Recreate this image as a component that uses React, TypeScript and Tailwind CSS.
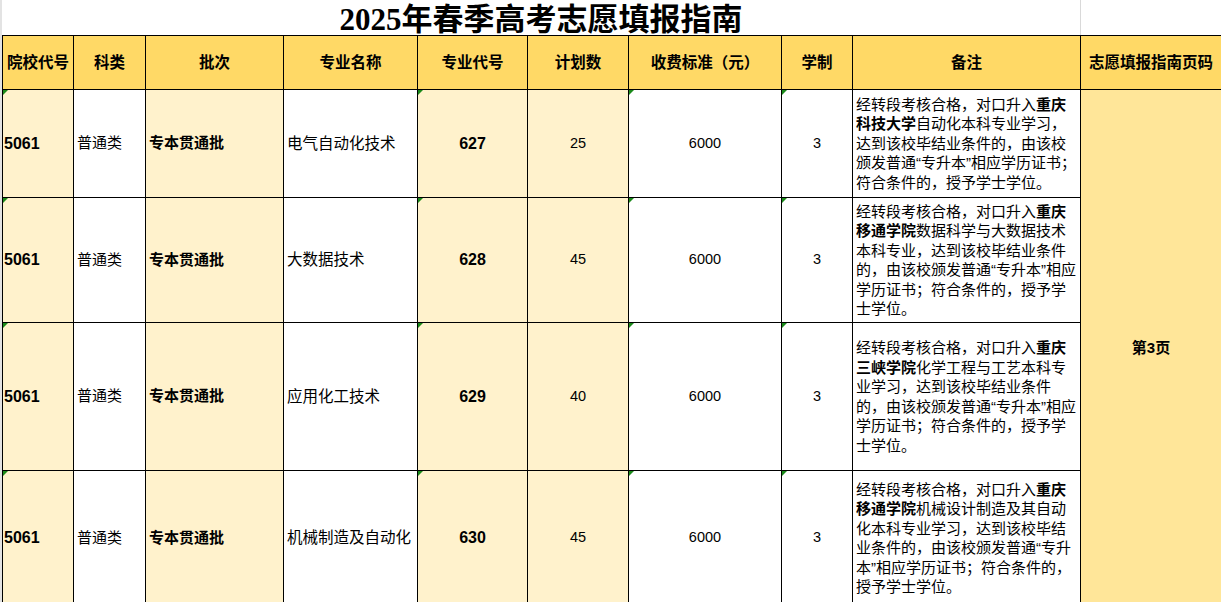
import React from "react";

const rows = [
  {
    major: "电气自动化技术",
    mcode: "627",
    plan: "25",
    uni: ["重庆", "科技大学"],
    rest: "自动化本科专业学习，达到该校毕结业条件的，由该校颁发普通“专升本”相应学历证书；符合条件的，授予学士学位。",
  },
  {
    major: "大数据技术",
    mcode: "628",
    plan: "45",
    uni: ["重庆", "移通学院"],
    rest: "数据科学与大数据技术本科专业，达到该校毕结业条件的，由该校颁发普通“专升本”相应学历证书；符合条件的，授予学士学位。",
  },
  {
    major: "应用化工技术",
    mcode: "629",
    plan: "40",
    uni: ["重庆", "三峡学院"],
    rest: "化学工程与工艺本科专业学习，达到该校毕结业条件的，由该校颁发普通“专升本”相应学历证书；符合条件的，授予学士学位。",
  },
  {
    major: "机械制造及自动化",
    mcode: "630",
    plan: "45",
    uni: ["重庆", "移通学院"],
    rest: "机械设计制造及其自动化本科专业学习，达到该校毕结业条件的，由该校颁发普通“专升本”相应学历证书；符合条件的，授予学士学位。",
  },
];

const headers = [
  "院校代号",
  "科类",
  "批次",
  "专业名称",
  "专业代号",
  "计划数",
  "收费标准（元）",
  "学制",
  "备注",
  "志愿填报指南页码",
];

// little green "number stored as text" marker
function Flag() {
  return (
    <span className="absolute left-0 top-0 w-0 h-0 border-t-[5px] border-r-[5px] border-t-[#1a8a1a] border-r-transparent" />
  );
}

export default function App() {
  return (
    <div className="w-[1221px] h-[602px] overflow-hidden bg-white border-l-2 border-[#e3e3e3] font-['Liberation_Sans','Noto_Sans_CJK_SC',sans-serif] text-black">
      {/* Title */}
      <div className="h-[35px] w-[1079px] border-r border-[#d9d9d9] flex items-center justify-center">
        <h1 className="text-[31px] leading-none font-bold font-['Liberation_Serif','Noto_Sans_CJK_SC',serif] pt-[3px]">
          2025年春季高考志愿填报指南
        </h1>
      </div>

      {/* Table */}
      <div className="grid grid-cols-[70px_71px_137px_133px_109px_100px_152px_70px_227px_1fr] grid-rows-[53px_107px_124px_147px_134px] gap-px bg-black border-l border-t border-black">
        {headers.map((h) => (
          <div
            key={h}
            className="bg-[#ffd966] flex items-center justify-center text-[15.5px] font-bold whitespace-nowrap"
          >
            {h}
          </div>
        ))}

        {rows.map((r, i) => (
          <React.Fragment key={r.mcode}>
            <div className="relative bg-[#fff2cc] flex items-center pl-px text-[16px] font-bold">
              <Flag />
              5061
            </div>
            <div className="bg-white flex items-center pl-[3px] text-[15px]">普通类</div>
            <div className="bg-[#fff2cc] flex items-center pl-[3px] text-[15px] font-bold">
              专本贯通批
            </div>
            <div className="bg-white flex items-center pl-[3px] text-[15.5px] whitespace-nowrap">
              {r.major}
            </div>
            <div className="relative bg-[#fff2cc] flex items-center justify-center text-[16px] font-bold">
              <Flag />
              {r.mcode}
            </div>
            <div className="bg-[#fff2cc] flex items-center justify-center text-[14.5px]">
              {r.plan}
            </div>
            <div className="relative bg-white flex items-center justify-center text-[14.5px]">
              <Flag />
              6000
            </div>
            <div className="relative bg-white flex items-center justify-center text-[14.5px]">
              <Flag />3
            </div>
            <div className="bg-white flex items-center pl-[3px] pr-[2px]">
              <p className="text-[15px] leading-[19.5px]">
                经转段考核合格，对口升入
                <b>
                  {r.uni[0]}
                  {r.uni[1]}
                </b>
                {r.rest}
              </p>
            </div>
            {i === 0 && (
              <div className="row-span-4 bg-[#ffe699] flex items-start justify-center pt-[247px] text-[15px] font-bold">
                第3页
              </div>
            )}
          </React.Fragment>
        ))}
      </div>
    </div>
  );
}
